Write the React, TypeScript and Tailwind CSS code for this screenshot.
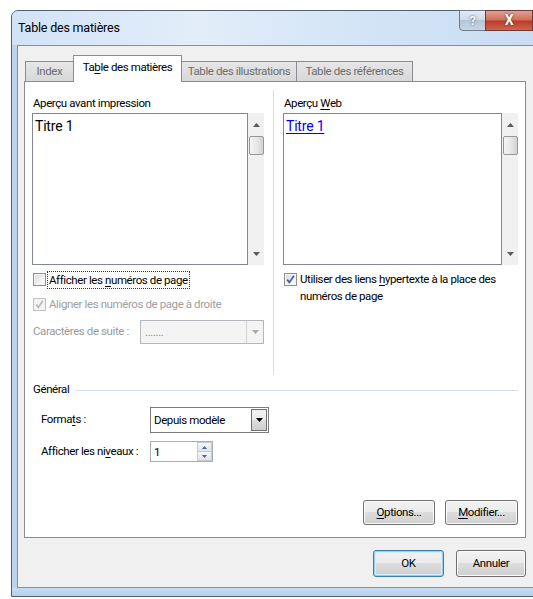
import type { ReactNode } from 'react';

// Win7 style "Table des matières" dialog (Word)

function Ul({ children }: { children: ReactNode }) {
  return <span className="underline decoration-1 underline-offset-[2px]">{children}</span>;
}

function Tri({ up = false, color = '#5a5a5a', w = 7 }: { up?: boolean; color?: string; w?: number }) {
  const h = Math.ceil(w / 2);
  const pts = up ? `0,${h} ${w / 2},0 ${w},${h}` : `0,0 ${w},0 ${w / 2},${h}`;
  return (
    <svg width={w} height={h} viewBox={`0 0 ${w} ${h}`}>
      <polygon points={pts} fill={color} />
    </svg>
  );
}

function Check({ checked = false, disabled = false }: { checked?: boolean; disabled?: boolean }) {
  return (
    <span
      className={`flex h-[13px] w-[13px] shrink-0 items-center justify-center border ${
        disabled
          ? 'border-[#c2c2c2] bg-[#f4f4f4]'
          : 'border-[#8e8f8f] bg-[linear-gradient(135deg,#d8d8d8,#f6f6f6_70%,#ffffff)] shadow-[inset_0_0_0_1px_#f4f4f4]'
      }`}
    >
      {checked && (
        <svg width="9" height="9" viewBox="0 0 9 9">
          <path
            d="M1.2 4.6 L3.4 7.4 L7.9 0.8"
            fill="none"
            stroke={disabled ? '#b9b9b9' : '#3c5ea6'}
            strokeWidth="1.7"
          />
        </svg>
      )}
    </span>
  );
}

function ScrollBar() {
  return (
    <div className="flex w-[16px] flex-col items-center bg-[#f0f0f0]">
      <div className="flex h-[23px] w-full items-center justify-center">
        <Tri up />
      </div>
      <div className="h-[19px] w-[15px] rounded-[2px] border border-[#979797] bg-[linear-gradient(90deg,#f5f5f5,#e6e6e6_55%,#d2d2d2)]" />
      <div className="flex-1" />
      <div className="flex h-[23px] w-full items-center justify-center">
        <Tri />
      </div>
    </div>
  );
}

function Preview({ box, link = false }: { box: string; link?: boolean }) {
  return (
    <div className="flex h-[152px]">
      <div className={`${box} border border-[#828790] bg-white pl-[2px] pt-[4px]`}>
        <span
          className={`text-[14px] leading-[17px] tracking-[-0.2px] ${
            link ? 'text-[#0000ff] underline decoration-1 underline-offset-[2px]' : 'text-black'
          }`}
        >
          Titre 1
        </span>
      </div>
      <ScrollBar />
    </div>
  );
}

function Button({ children, w, primary = false }: { children: ReactNode; w: string; primary?: boolean }) {
  return (
    <div
      className={`${w} flex h-full items-center justify-center rounded-[3px] border bg-[linear-gradient(#f2f2f2_0%,#ebebeb_50%,#dddddd_50%,#cfcfcf_100%)] text-black ${
        primary
          ? 'border-[#3c7fb1] shadow-[inset_0_0_0_1px_#8fd2f5,inset_0_0_0_2px_#d8eefb]'
          : 'border-[#707070] shadow-[inset_0_0_0_1px_#fbfbfb]'
      }`}
    >
      {children}
    </div>
  );
}

function Tab({ children, active = false, w }: { children: ReactNode; active?: boolean; w: string }) {
  if (active) {
    return (
      <div className={`${w} relative z-10 -mb-px -ml-px flex h-[27px] items-center justify-center border-x border-t border-[#898c95] bg-white pb-[2px] text-black`}>
        {children}
      </div>
    );
  }
  return (
    <div className={`${w} -ml-px flex h-[20px] items-center justify-center border-x border-t border-[#898c95] bg-[linear-gradient(#e6e6e6,#d8d8d8)] text-[#6d6d6d]`}>
      {children}
    </div>
  );
}

export default function App() {
  return (
    <div className="h-[599px] w-[533px] overflow-hidden bg-white font-['Roboto',sans-serif] text-[11.5px] tracking-[-0.4px] text-black">
      <div className="ml-[11px] mt-[10px] flex w-[530px] flex-col rounded-tl-[7px] border border-[#55606e] bg-[#bcd4ee]">
        {/* title bar */}
        <div className="flex h-[34px] rounded-tl-[6px] bg-[linear-gradient(90deg,#d2e3f6,#e2edf9_35%,#d6e6f7_60%,#c9dcf2)]">
          <div className="pl-[6px] pt-[8px] text-[12.5px] tracking-[-0.2px] text-black">Table des matières</div>
          <div className="flex-1" />
          <div className="mr-[7px] -mt-px flex h-[21px]">
            <div className="flex w-[27px] items-center justify-center rounded-bl-[4px] border border-[#6d7b8c] bg-[linear-gradient(#e3ebf4,#cdd9e6_50%,#b5c5d7_50%,#c7d6e6)] text-[13px] font-bold text-[#f4f7fa] [text-shadow:0_0_2px_#3a4658]">
              ?
            </div>
            <div className="-ml-px flex w-[48px] items-center justify-center border border-[#6d3a33] bg-[linear-gradient(#e3a093,#d0705d_45%,#bd3c27_55%,#cf6450)] text-[14px] font-bold text-white [text-shadow:0_0_2px_#4a1a12]">
              X
            </div>
          </div>
        </div>

        {/* client area */}
        <div className="ml-[5px] mr-[5px] border border-[#7d91a8] bg-[#f0f0f0] pb-[10px] pl-[6px] pt-[9px]">
          <div className="flex h-[26px] items-end pl-[2px]">
            <Tab w="w-[49px]">Index</Tab>
            <Tab w="w-[109px]" active>
              Ta<Ul>b</Ul>le des matières
            </Tab>
            <Tab w="w-[116px]">Table des illustrations</Tab>
            <Tab w="w-[117px]">Table des références</Tab>
          </div>

          <div className="flex h-[457px] w-[502px] flex-col border border-[#898c95] bg-white px-[7px]">
            <div className="flex pt-[8px]">
              {/* print preview column */}
              <div className="w-[232px] pt-[5px]">
                <div className="h-[16px] pl-[1px] leading-[16px]">Aperçu avant impression</div>
                <div className="mt-[2px]">
                  <Preview box="w-[216px]" />
                </div>
                <div className="mt-[5px] flex h-[19px] items-center pl-[1px]">
                  <Check />
                  <span className="ml-[1px] border border-dotted border-[#333] px-[1px] leading-[16px]">
                    Afficher les <Ul>n</Ul>uméros de page
                  </span>
                </div>
                <div className="mt-[7px] flex h-[17px] items-center pl-[1px] text-[#a0a0a0]">
                  <Check checked disabled />
                  <span className="ml-[3px]">Aligner les numéros de page à droite</span>
                </div>
                <div className="mt-[7px] flex h-[24px] items-center">
                  <span className="w-[108px] pl-[1px] text-[#9a9a9a]">Caractères de suite :</span>
                  <div className="flex h-full w-[124px] border border-[#b5b9bd] bg-[#f4f4f4]">
                    <span className="flex-1 pl-[4px] pt-[3px] text-[#8a8a8a]">.......</span>
                    <div className="flex w-[17px] items-center justify-center border-l border-[#d2d2d2]">
                      <Tri color="#a8a8a8" />
                    </div>
                  </div>
                </div>
              </div>

              <div className="ml-[9px] h-[285px] w-px bg-[#d5dfe5]" />

              {/* web preview column */}
              <div className="ml-[9px] w-[235px] pt-[5px]">
                <div className="h-[16px] pl-[1px] leading-[16px]">
                  Aperçu <Ul>W</Ul>eb
                </div>
                <div className="mt-[2px]">
                  <Preview box="w-[219px]" link />
                </div>
                <div className="mt-[8px] flex items-start pl-[1px]">
                  <Check checked />
                  <span className="ml-[3px] -mt-[2px] leading-[17px]">
                    Utiliser des liens <Ul>h</Ul>ypertexte à la place des
                    <br />
                    numéros de page
                  </span>
                </div>
              </div>
            </div>

            {/* general section */}
            <div className="mt-[7px] flex h-[16px] items-center pl-[1px]">
              <span>Général</span>
              <div className="ml-[7px] h-px flex-1 bg-[#d5dfe5]" />
            </div>
            <div className="mt-[9px] flex h-[26px] items-center pl-[9px]">
              <span className="w-[109px]">
                Forma<Ul>t</Ul>s :
              </span>
              <div className="flex h-full w-[119px] border border-[#7a7a7a] bg-white">
                <span className="flex-1 pl-[3px] pt-[4px]">Depuis modèle</span>
                <div className="m-px flex w-[16px] items-center justify-center border border-[#707070] bg-[linear-gradient(#f2f2f2,#ebebeb_50%,#dddddd_50%,#cfcfcf)]">
                  <Tri color="#000" />
                </div>
              </div>
            </div>
            <div className="mt-[8px] flex h-[21px] items-center pl-[9px]">
              <span className="w-[109px]">
                Afficher les ni<Ul>v</Ul>eaux :
              </span>
              <div className="flex h-full w-[63px] border border-[#abadb3] bg-white">
                <span className="flex-1 pl-[3px] pt-[2px]">1</span>
                <div className="flex w-[15px] flex-col">
                  <div className="flex flex-1 items-center justify-center border border-[#c6cbd2] bg-[linear-gradient(#f5f7fa,#dfe4ea)]">
                    <Tri up color="#4f6488" w={5} />
                  </div>
                  <div className="flex flex-1 items-center justify-center border border-t-0 border-[#c6cbd2] bg-[linear-gradient(#f5f7fa,#dfe4ea)]">
                    <Tri color="#4f6488" w={5} />
                  </div>
                </div>
              </div>
            </div>

            <div className="mt-auto mb-[12px] flex h-[25px] justify-end gap-[10px]">
              <Button w="w-[72px]">
                <Ul>O</Ul>ptions...
              </Button>
              <Button w="w-[73px]">
                <Ul>M</Ul>odifier...
              </Button>
            </div>
          </div>

          <div className="mt-[12px] flex h-[27px] w-[502px] justify-end gap-[12px]">
            <Button w="w-[71px]" primary>
              OK
            </Button>
            <Button w="w-[70px]">Annuler</Button>
          </div>
        </div>

        {/* bottom frame */}
        <div className="h-[8px] bg-[linear-gradient(#c6dcf3,#b6d0ec)]" />
      </div>
    </div>
  );
}
